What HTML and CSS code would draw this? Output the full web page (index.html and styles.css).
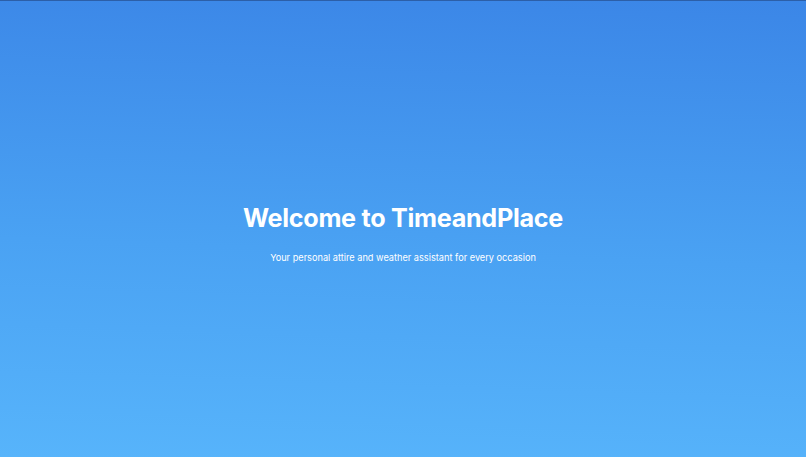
FILE: index.html
```html
<!DOCTYPE html>
<html>
<head>
<meta charset="utf-8">
<link rel="stylesheet" href="styles.css">
</head>
<body>
<main class="hero">
  <h1 class="title">Welcome to TimeandPlace</h1>
  <p class="subtitle">Your personal attire and weather assistant for every occasion</p>
</main>
</body>
</html>
```
FILE: styles.css
```css
html, body {
  margin: 0;
  padding: 0;
  height: 100%;
}
body {
  font-family: Inter, "Noto Sans", sans-serif;
  color: #ffffff;
  border-top: 1px solid #2c5fa8;
  box-sizing: border-box;
  background: linear-gradient(182deg, #3b86e7 0%, #4aa2f3 55%, #57b4fb 100%);
}
.hero {
  height: 100%;
  display: flex;
  flex-direction: column;
  align-items: center;
  justify-content: center;
  padding-top: 9px;
  box-sizing: border-box;
}
.title {
  margin: 0;
  font-size: 25.2px;
  line-height: 30px;
  font-weight: 700;
  letter-spacing: -0.3px;
}
.subtitle {
  margin: 19px 0 0 0;
  font-size: 9.2px;
  line-height: 12px;
  font-weight: 400;
}
```
